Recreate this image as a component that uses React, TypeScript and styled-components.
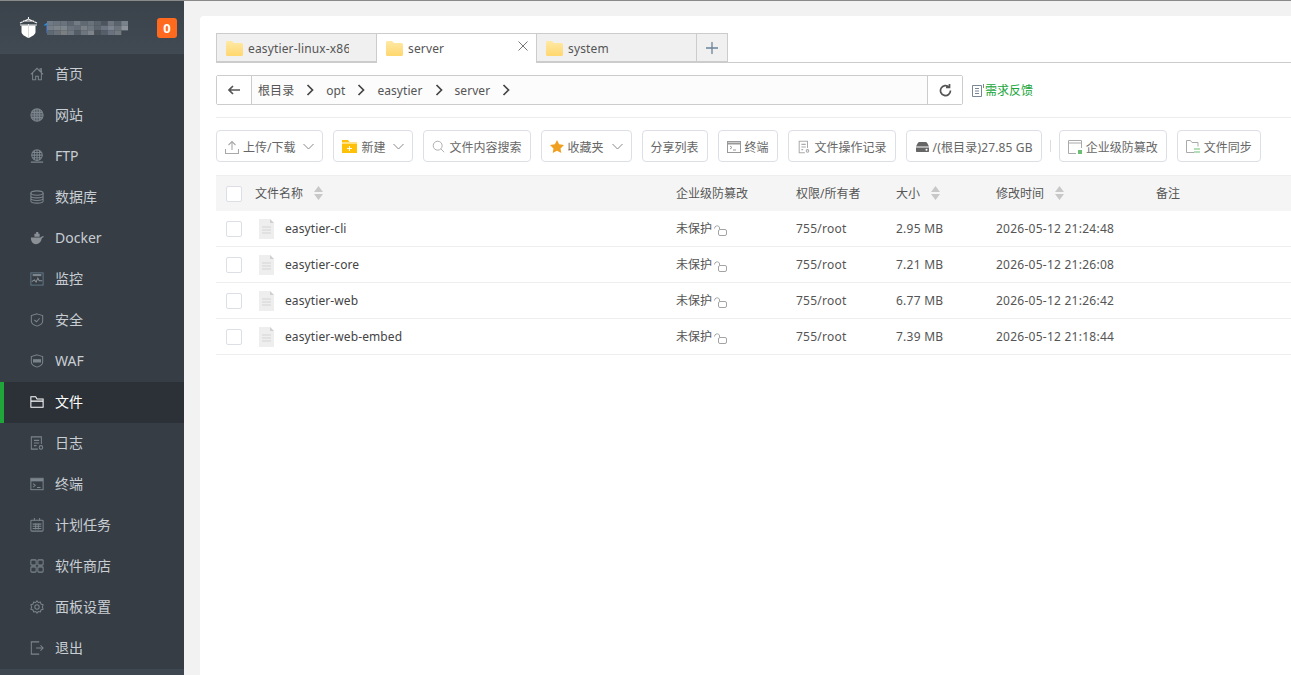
import { ReactNode } from 'react'
import styled, { createGlobalStyle } from 'styled-components'

const GlobalStyle = createGlobalStyle`
  html, body {
    margin: 0;
    height: 100%;
    overflow: hidden;
    background: #f2f2f2;
    font-family: "Noto Sans", "Noto Sans CJK SC", sans-serif;
    font-size: 12px;
    color: #666;
  }
  * { box-sizing: border-box; }
`

const Page = styled.div`
  display: flex;
  height: 675px;
  border-top: 1px solid #8a8a8a;
`

const Sidebar = styled.aside`
  width: 184px;
  flex-shrink: 0;
  background: #3e4750;
  display: flex;
  flex-direction: column;
`

const Brand = styled.div`
  height: 53px;
  display: flex;
  align-items: center;
  padding: 0 7px 0 19px;
  background: linear-gradient(#3a424a, #414a53);
`

const BrandIp = styled.span`
  color: #20a0e0;
  font-size: 14px;
  margin-left: 5px;
`

// pixelated cover over the rest of the address
const Mosaic = styled.svg`
  margin-left: -4px;
  position: relative;
`

const Badge = styled.span`
  margin-left: auto;
  width: 20px;
  height: 20px;
  border-radius: 3px;
  background: #ff6a1f;
  color: #fff;
  font-weight: 700;
  font-size: 13px;
  display: flex;
  align-items: center;
  justify-content: center;
`

const Menu = styled.nav`
  background: #363d44;
`

const MenuItem = styled.div<{ $active?: boolean }>`
  height: 41px;
  display: flex;
  align-items: center;
  gap: 11px;
  padding-left: ${(p) => (p.$active ? '26px' : '30px')};
  border-left: ${(p) => (p.$active ? '4px solid #20a53a' : 'none')};
  background: ${(p) => (p.$active ? '#2c3138' : 'transparent')};
  color: ${(p) => (p.$active ? '#fff' : '#c8ced4')};
  font-size: 14px;
  svg {
    flex-shrink: 0;
    margin-bottom: 1px;
    color: ${(p) => (p.$active ? '#fff' : '#7c858d')};
  }
`

const MenuLabel = styled.span<{ $latin?: boolean }>`
  padding-bottom: ${(p) => (p.$latin ? '2px' : '4px')};
`

const Main = styled.main`
  flex: 1;
  min-width: 0;
  padding: 15px 0 0 16px;
`

const Panel = styled.section`
  height: 100%;
  background: #fff;
  border-radius: 4px 0 0 0;
  padding: 17px 0 0 16px;
  overflow: hidden;
`

const TabBar = styled.div`
  display: flex;
  height: 30px;
  border-bottom: 1px solid #ccc;
`

const Tab = styled.div<{ $active?: boolean }>`
  width: 161px;
  height: ${(p) => (p.$active ? '30px' : '29px')};
  margin-right: -1px;
  padding: ${(p) => (p.$active ? '0' : '1px')} 9px 0;
  display: flex;
  align-items: center;
  gap: 5px;
  position: relative;
  z-index: ${(p) => (p.$active ? 1 : 0)};
  background: ${(p) => (p.$active ? '#fff' : '#f0f0f0')};
  border: 1px solid #ccc;
  border-bottom: ${(p) => (p.$active ? 'none' : '1px solid #ccc')};
  color: #555;
  font-size: 12px;
  letter-spacing: 0.15px;
  white-space: nowrap;
`

const TabLabel = styled.span`
  width: 101px;
  overflow: hidden;
`

const TabClose = styled.span`
  position: absolute;
  right: 8px;
  top: 7px;
  display: flex;
  color: #777;
`

const AddTab = styled.div`
  width: 32px;
  height: 29px;
  display: flex;
  align-items: center;
  justify-content: center;
  background: #f0f0f0;
  border: 1px solid #ccc;
  color: #6a8299;
`

const PathRow = styled.div`
  display: flex;
  align-items: center;
  margin-top: 12px;
  padding-bottom: 12px;
  border-bottom: 1px solid #ececec;
`

const PathBox = styled.div`
  width: 747px;
  height: 30px;
  display: flex;
  border: 1px solid #ccc;
  border-radius: 2px;
  background: #fcfcfc;
`

const PathButton = styled.div<{ $side: 'left' | 'right' }>`
  width: 35px;
  flex-shrink: 0;
  margin-left: ${(p) => (p.$side === 'right' ? 'auto' : '0')};
  background: #fff;
  display: flex;
  align-items: center;
  justify-content: center;
  color: #555;
  border-left: ${(p) => (p.$side === 'right' ? '1px solid #ccc' : 'none')};
  border-right: ${(p) => (p.$side === 'left' ? '1px solid #ccc' : 'none')};
`

const Crumb = styled.div`
  display: flex;
  align-items: center;
  gap: 12px;
  padding: 0 6px;
  color: #555;
  font-size: 12px;
  letter-spacing: 0.07px;
  svg { color: #444; }
`

const Feedback = styled.a`
  display: flex;
  align-items: center;
  margin-left: 9px;
  color: #20a53a;
  font-size: 12px;
  svg { color: #7a8694; }
`

const Toolbar = styled.div`
  display: flex;
  align-items: center;
  gap: 10px;
  margin-top: 12px;
`

const ToolButton = styled.div<{ $track?: boolean }>`
  height: 32px;
  padding: 1px 8px 0;
  display: flex;
  align-items: center;
  gap: 4px;
  background: #fff;
  border: 1px solid #dcdfe6;
  border-radius: 4px;
  color: #666;
  font-size: 12px;
  letter-spacing: ${(p) => (p.$track ? '0.15px' : '0')};
  white-space: nowrap;
`

const ToolSep = styled.span`
  width: 1px;
  height: 12px;
  margin: 0 -2px;
  background: #ddd;
`

const Grid = styled.div`
  display: grid;
  grid-template-columns: 39px 421px 120px 100px 100px 160px 1fr;
  align-items: center;
  height: 36px;
  border-bottom: 1px solid #eee;
  color: #555;
  font-size: 12px;
`

const HeadRow = styled(Grid)`
  margin-top: 13px;
  background: #f5f5f5;
  border-top: 1px solid #eee;
  border-bottom: none;
`

const Check = styled.span`
  width: 16px;
  height: 16px;
  margin-left: 10px;
  background: #fff;
  border: 1px solid #dcdfe6;
  border-radius: 2px;
`

const HeadCell = styled.div`
  display: flex;
  align-items: center;
  gap: 11px;
  padding-bottom: 2px;
`

const NameCell = styled.div`
  display: flex;
  align-items: center;
  gap: 11px;
  padding-left: 4px;
  color: #444;
  letter-spacing: 0.1px;
`

const NameText = styled.span`
  padding-bottom: 1px;
`

const DataCell = styled.div`
  letter-spacing: 0.25px;
`

const ProtectCell = styled.div`
  display: flex;
  align-items: center;
  gap: 2px;
  padding-bottom: 2px;
  svg { margin-top: 5px; }
`

const I = ({ size = 14, children }: { size?: number; children: ReactNode }) => (
  <svg
    width={size}
    height={size}
    viewBox="0 0 16 16"
    fill="none"
    stroke="currentColor"
    strokeWidth="1.15"
  >
    {children}
  </svg>
)

const FolderIcon = () => (
  <svg width="17" height="15" viewBox="0 0 17 15">
    <defs>
      <linearGradient id="fold" x1="0" y1="0" x2="0" y2="1">
        <stop offset="0" stopColor="#ffe9a6" />
        <stop offset="1" stopColor="#ffd76e" />
      </linearGradient>
    </defs>
    <path d="M0 1.5C0 .7.7 0 1.5 0H6l2 2h7.500c.8 0 1.500.7 1.500 1.500V13.500c0 .8-.7 1.500-1.500 1.500h-14C.7 15 0 14.300 0 13.500z" fill="url(#fold)" />
  </svg>
)

const Chevron = () => (
  <svg width="8" height="12" viewBox="0 0 8 12" fill="none" stroke="currentColor" strokeWidth="1.700">
    <path d="M1.500 1l5 5-5 5" />
  </svg>
)

const Down = () => (
  <svg width="11" height="7" viewBox="0 0 11 7" fill="none" stroke="#888" style={{ marginLeft: 4 }}>
    <path d="M.5 1l5 5 5-5" />
  </svg>
)

const Sort = () => (
  <svg width="9" height="14" viewBox="0 0 9 14" fill="#c8c8c8">
    <path d="M4.500 0L9 6H0zM4.500 14L0 8h9z" />
  </svg>
)

const FileIcon = () => (
  <svg width="15" height="20" viewBox="0 0 15 20">
    <path d="M0 0h11l4 4v16H0z" fill="#eee" />
    <path d="M11 0l4 4h-4z" fill="#d0d0d0" />
    <path d="M3 8h9M3 11h9M3 14h9" stroke="#d4d4d4" />
  </svg>
)

const LockIcon = () => (
  <svg width="13" height="11" viewBox="0 0 13 11" fill="none" stroke="#a4a4a4">
    <rect x="4.500" y="4.500" width="8" height="6" rx="1.500" />
    <path d="M.5 3.500C.5 0 5.500 0 5.500 3v1" />
  </svg>
)

const menuItems: { label: string; icon: ReactNode; active?: boolean }[] = [
  { label: '首页', icon: <I><path d="M1 8.500L8 1.500l7 7M11.500 4.500V2h1.500v4.500M3 7v7.500h3.500v-4h3v4H13V7" /></I> },
  { label: '网站', icon: <I><circle cx="8" cy="8" r="7" fill="#555c63" /><path d="M1 8h14M2 5h12M2 11h12M8 1v14M5 1.500v13M11 1.500v13" /></I> },
  { label: 'FTP', icon: <I><circle cx="8" cy="7" r="6" /><path d="M2 7h12M3 4h10M3 10h10M8 1v12M5 1.500v11M11 1.500v11M1 15h14" /></I> },
  { label: '数据库', icon: <I><ellipse cx="8" cy="3.500" rx="7" ry="2.500" /><path d="M1 3.500v9C1 13.900 4.100 15 8 15s7-1.100 7-2.500v-9M1 6.500C1 7.900 4.100 9 8 9s7-1.100 7-2.500M1 9.500C1 10.900 4.100 12 8 12s7-1.100 7-2.500" /></I> },
  { label: 'Docker', icon: <I><path d="M1 7.500h11c.5-1 1.800-1.800 4-1.500-.5 1-1.500 1.800-2.500 2C13 12 10.500 15 6.500 15 3 15 1 12 1 7.500zM5 6.500V3h2V1h2.500v2H11v3.500z" fill="#8a9096" stroke="none" /></I> },
  { label: '监控', icon: <I><rect x="1" y="1" width="14" height="14" stroke="#5f7686" /><path d="M3 3.500h10" strokeWidth="2.500" /><path d="M2 11l3-2 2 2.500 2-4.500 1.500 3H14" stroke="#8a9096" /></I> },
  { label: '安全', icon: <I><path d="M8 1l6.500 2v6c0 3-3.500 5-6.500 6-3-1-6.500-3-6.500-6V3z" /><path d="M5 8l2.500 2L11 6" /></I> },
  { label: 'WAF', icon: <I><path d="M8 1l6.500 2v6c0 3-3.500 5-6.500 6-3-1-6.500-3-6.500-6V3z" /><path d="M4 6.500h8V9H4z" fill="currentColor" /></I> },
  { label: '文件', active: true, icon: <I><path d="M1 14V2h5.500l1.500 2.500h7V14zM1 7h14" /></I> },
  { label: '日志', icon: <I><path d="M13 9V1H1.500v14H9M4.500 5h6M4.500 8h6M4.500 11h3" /><circle cx="12.500" cy="13" r="2" /></I> },
  { label: '终端', icon: <I><rect x="1" y="1.500" width="14" height="13" /><path d="M1 3.500h14" strokeWidth="3" /><path d="M3.500 7.500l2.500 2-2.500 2M8 12h4" /></I> },
  { label: '计划任务', icon: <I><rect x="1" y="2.500" width="14" height="12.500" rx="1" /><path d="M5 0v3M11 0v3M3 7h10M3 9.500h10M3 12h10M6.500 6v7M9.500 6v7" /></I> },
  { label: '软件商店', icon: <I><rect x="1" y="1" width="6" height="6" rx="1" /><rect x="9" y="1" width="6" height="6" rx="1" /><rect x="1" y="9" width="6" height="6" rx="1" /><rect x="9" y="9" width="6" height="6" rx="1" /></I> },
  { label: '面板设置', icon: <I><path d="M8 1l1.500 1.800 2.400-.5.7 2.300 2.400 1-.9 2.400.9 2.400-2.400 1-.7 2.300-2.400-.5L8 15l-1.500-1.800-2.400.5-.7-2.300-2.400-1 .9-2.400L1 5.600l2.400-1 .7-2.300 2.400.5z" /><circle cx="8" cy="8" r="2.500" /></I> },
  { label: '退出', icon: <I><path d="M10.500 1H1.500v14h9M7 8h8M12 5l3 3-3 3" /></I> },
]

const tools: { label: string; icon: ReactNode; down?: boolean; track?: boolean }[] = [
  { label: '上传/下载', down: true, icon: <svg width="14" height="14" viewBox="0 0 14 14" fill="none" stroke="#a8a8a8" strokeWidth="1.100"><path d="M7 10V1.500M3.500 5L7 1.500 10.500 5M.5 9v4.500h13V9" /></svg> },
  { label: '新建', down: true, icon: <svg width="15" height="13" viewBox="0 0 15 13"><path d="M0 0h6l1.500 2H15v11H0z" fill="#ffc107" /><path d="M0 3h15" stroke="#fff" /><path d="M7.500 6v5M5 8.500h5" stroke="#fff" /></svg> },
  { label: '文件内容搜索', icon: <I size={13}><circle cx="7" cy="7" r="5.500" stroke="#aaa" /><path d="M11 11l4 4" stroke="#aaa" /></I> },
  { label: '收藏夹', down: true, icon: <svg width="14" height="13" viewBox="0 0 14 13"><path d="M7 0l2.100 4.300 4.900.7-3.500 3.400.8 4.600L7 10.800 2.700 13l.8-4.600L0 5l4.900-.7z" fill="#f0a020" /></svg> },
  { label: '分享列表', icon: null },
  { label: '终端', icon: <svg width="14" height="12" viewBox="0 0 14 12" fill="none" stroke="#999"><rect x=".5" y=".5" width="13" height="11" /><path d="M.5 2.500h13" strokeWidth="2" /><path d="M3 5l2 1.500L3 8M6 9h3" /></svg> },
  { label: '文件操作记录', icon: <I size={14}><path d="M12 9V1.500H2.500v13H9M5 5h5M5 8h5M5 11h2" stroke="#aaa" /><circle cx="12" cy="12.500" r="1.500" stroke="#aaa" /></I> },
  { label: '/(根目录)27.85 GB', track: true, icon: <svg width="13" height="10" viewBox="0 0 13 10" style={{ marginLeft: 1 }}><path d="M3 0h7c1 0 2 2.500 3 4.500H0C1 2.500 2 0 3 0z" fill="#666" /><path d="M0 5.500h13V9c0 .6-.4 1-1 1H1c-.6 0-1-.4-1-1z" fill="#666" /><circle cx="10.500" cy="7.700" r="1" fill="#fff" /></svg> },
]

const toolsRight: { label: string; icon: ReactNode }[] = [
  { label: '企业级防篡改', icon: <svg width="14" height="14" viewBox="0 0 14 14" fill="none" stroke="#aaa"><path d="M13.500 8V.5H.5v13H8M.5 3h13" /><path d="M10 10h4v4h-4z" fill="#6bbf73" stroke="none" /></svg> },
  { label: '文件同步', icon: <svg width="14" height="13" viewBox="0 0 14 13" fill="none" stroke="#aaa"><path d="M8 12.500H.5V.5h4L6 2.500h6v4" /><path d="M8 9h6M8 12h6" stroke="#6bbf73" /></svg> },
]

const files = [
  { name: 'easytier-cli', size: '2.95 MB', time: '2026-05-12 21:24:48' },
  { name: 'easytier-core', size: '7.21 MB', time: '2026-05-12 21:26:08' },
  { name: 'easytier-web', size: '6.77 MB', time: '2026-05-12 21:26:42' },
  { name: 'easytier-web-embed', size: '7.39 MB', time: '2026-05-12 21:18:44' },
]

const mosaic = [
  ['#6f7a86', '#6b747e', '#6a737d', '#5d6670', '#727a84', '#606872', '#69727b', '#5b636c', '#4c545d', '#6f7680', '#5a626c', '#79818a'],
  ['#77808a', '#7d848a', '#7d858d', '#6b747d', '#656e78', '#7a8086', '#6e767f', '#5c646d', '#6c7482', '#7c8490', '#6c737a', '#8c939a'],
  ['#5f6973', '#6a7178', '#7b7f80', '#6f7780', '#555d66', '#6d757e', '#7e8489', '#4a5159', '#565e69', '#6a7280', '#737a80'],
]

const BrandLogo = () => (
  <svg width="19" height="21" viewBox="0 0 19 21">
    <path d="M2.500 8.500h14V15c0 2.500-3.500 4.500-7 6-3.500-1.500-7-3.500-7-6z" fill="#fff" />
    <path d="M9.500 7v14" stroke="#d8d8d8" />
    <path d="M9.500 0v2M1 6l8.500-4L18 6M1 8h17M4 4h11" stroke="#f0f0f0" strokeWidth="1.100" fill="none" />
  </svg>
)

export default function App() {
  return (
    <Page>
      <GlobalStyle />
      <Sidebar>
        <Brand>
          <BrandLogo />
          <BrandIp>1</BrandIp>
          <Mosaic width="81" height="14" viewBox="0 0 81 14">
            {mosaic.map((row, y) =>
              row.map((c, x) => <rect key={`${x}-${y}`} x={x * 6.75} y={y * 4.67} width="6.8" height="4.7" fill={c} />)
            )}
          </Mosaic>
          <Badge>0</Badge>
        </Brand>
        <Menu>
          {menuItems.map((item) => (
            <MenuItem key={item.label} $active={item.active}>
              {item.icon}
              <MenuLabel $latin={/^[A-Za-z]/.test(item.label)}>{item.label}</MenuLabel>
            </MenuItem>
          ))}
        </Menu>
      </Sidebar>
      <Main>
        <Panel>
          <TabBar>
            <Tab><FolderIcon /><TabLabel>easytier-linux-x86_64</TabLabel></Tab>
            <Tab $active>
              <FolderIcon />
              <TabLabel>server</TabLabel>
              <TabClose>
                <svg width="10" height="10" viewBox="0 0 10 10" stroke="currentColor"><path d="M.5.5l9 9M9.500.5l-9 9" /></svg>
              </TabClose>
            </Tab>
            <Tab><FolderIcon /><TabLabel>system</TabLabel></Tab>
            <AddTab>
              <svg width="12" height="12" viewBox="0 0 12 12" stroke="currentColor" strokeWidth="1.300"><path d="M6 0v12M0 6h12" /></svg>
            </AddTab>
          </TabBar>
          <PathRow>
            <PathBox>
              <PathButton $side="left">
                <svg width="12" height="10" viewBox="0 0 12 10" fill="none" stroke="currentColor" strokeWidth="1.700"><path d="M12 5H1M5 1L1 5l4 4" /></svg>
              </PathButton>
              {['根目录', 'opt', 'easytier', 'server'].map((c) => (
                <Crumb key={c}>{c}<Chevron /></Crumb>
              ))}
              <PathButton $side="right">
                <svg width="13" height="13" viewBox="0 0 13 13" fill="none" stroke="currentColor" strokeWidth="1.700"><path d="M11.500 6.500a5 5 0 1 1-1.500-3.500M10.500 0v3.500H7" /></svg>
              </PathButton>
            </PathBox>
            <Feedback>
              <svg width="13" height="13" viewBox="0 0 13 13" fill="none" stroke="currentColor"><path d="M9.500 1.500H.5v11h9zM3 4.500h4M3 7h4M3 9.500h4M11.500 0v4" /></svg>
              需求反馈
            </Feedback>
          </PathRow>
          <Toolbar>
            {tools.map((t) => (
              <ToolButton key={t.label} $track={t.track}>
                {t.icon}
                {t.label}
                {t.down && <Down />}
              </ToolButton>
            ))}
            <ToolSep />
            {toolsRight.map((t) => (
              <ToolButton key={t.label}>{t.icon}{t.label}</ToolButton>
            ))}
          </Toolbar>
          <HeadRow>
            <Check />
            <HeadCell>文件名称<Sort /></HeadCell>
            <HeadCell>企业级防篡改</HeadCell>
            <HeadCell>权限/所有者</HeadCell>
            <HeadCell>大小<Sort /></HeadCell>
            <HeadCell>修改时间<Sort /></HeadCell>
            <HeadCell>备注</HeadCell>
          </HeadRow>
          {files.map((f) => (
            <Grid key={f.name}>
              <Check />
              <NameCell><FileIcon /><NameText>{f.name}</NameText></NameCell>
              <ProtectCell>未保护<LockIcon /></ProtectCell>
              <DataCell>755/root</DataCell>
              <DataCell>{f.size}</DataCell>
              <DataCell>{f.time}</DataCell>
              <div />
            </Grid>
          ))}
        </Panel>
      </Main>
    </Page>
  )
}
